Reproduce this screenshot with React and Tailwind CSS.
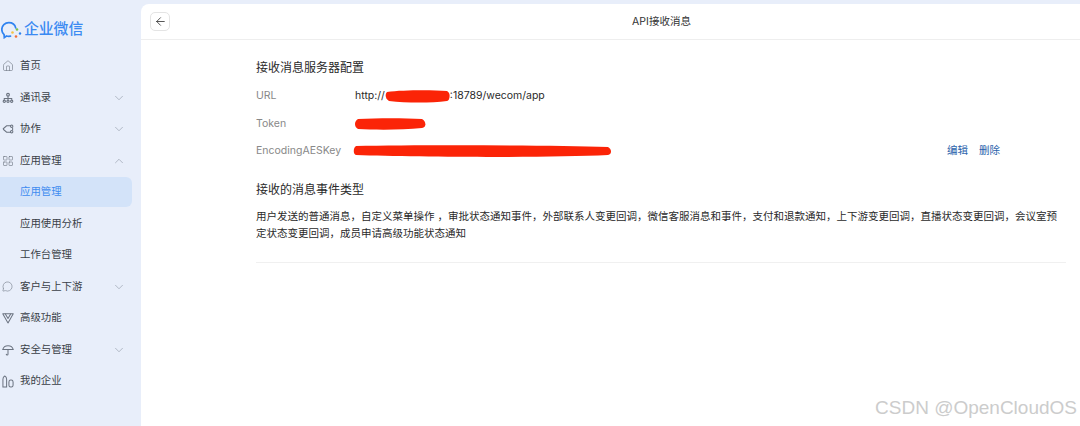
import React from 'react';
import { ChevronDown, ChevronUp, ArrowLeft, House, LayoutGrid, MessageCircle } from 'lucide-react';

const font = 'font-["Inter","Noto_Sans_CJK_SC",sans-serif]';

function Logo() {
    return (
        <svg width="22" height="20" viewBox="0 0 22 20" fill="none">
            <path d="M9.500 17.200c-.6.100-1.200.1-1.800.1-.8 0-1.500-.1-2.200-.3L3.300 18.600l-.2-3C1.600 14.200.8 12.500.8 10.500c0-3.900 3.100-6.900 7-6.900 3.400 0 6.200 2.200 6.900 5.300" stroke="#2f83f0" strokeWidth="1.700" strokeLinecap="round" />
            <circle cx="16" cy="10.500" r="1.300" fill="#7cc04a" />
            <circle cx="19" cy="14.500" r="1.200" fill="#2f83f0" />
            <circle cx="15" cy="17.500" r="1.300" fill="#f0703a" />
            <circle cx="11.500" cy="13.500" r="1.300" fill="#f5c242" />
        </svg>
    );
}

function OrgIcon() {
    return (
        <svg width="12" height="12" viewBox="0 0 13 13" fill="none" stroke="#6b7380" strokeWidth="1.200">
            <circle cx="6.500" cy="3" r="1.500" />
            <path d="M2.500 8.500V7h8v1.500M6.500 4.500V8.500" />
            <circle cx="2.500" cy="10" r="1.200" />
            <circle cx="6.500" cy="10" r="1.200" />
            <circle cx="10.500" cy="10" r="1.200" />
        </svg>
    );
}

function CollabIcon() {
    return (
        <svg width="12" height="12" viewBox="0 0 13 13" fill="none" stroke="#6b7380" strokeWidth="1.100">
            <path d="M1 6.500 5 3h5M1 6.500 5 10h5" />
            <circle cx="10.500" cy="3.500" r="1.300" />
            <circle cx="10.500" cy="9.500" r="1.300" />
            <path d="M11.500 5v3" />
        </svg>
    );
}

function VipIcon() {
    return (
        <svg width="12" height="12" viewBox="0 0 13 13" fill="none" stroke="#6b7380" strokeWidth="1.100" strokeLinejoin="round">
            <path d="M.8 2h11.400L6.500 11.800z" />
            <path d="M3.500 2 6.500 7l3-5" />
        </svg>
    );
}

function UmbrellaIcon() {
    return (
        <svg width="12" height="12" viewBox="0 0 13 13" fill="none" stroke="#6b7380" strokeWidth="1.100" strokeLinecap="round">
            <path d="M.8 6C1.500 3.300 3.700 1.800 6.500 1.800S11.500 3.300 12.200 6z" />
            <path d="M6.500 6v5c0 1.200-1.800 1.200-1.900 0" />
        </svg>
    );
}

function CompanyIcon() {
    return (
        <svg width="12" height="13" viewBox="0 0 13 14" fill="none" stroke="#6b7380" strokeWidth="1.100">
            <path d="M1 13V4.500C1 3 2 1.500 3 1c1 .5 2 2 2 3.500V13z" />
            <rect x="7.500" y="5.500" width="4.500" height="7.500" rx="2" />
        </svg>
    );
}

const chevron = <ChevronDown size={14} strokeWidth={1} className="text-[#8a93a1]" />;

const navItems = [
    { label: '首页', icon: <House size={12} strokeWidth={1.200} className="text-[#6b7380]" /> },
    { label: '通讯录', icon: <OrgIcon />, arrow: chevron },
    { label: '协作', icon: <CollabIcon />, arrow: chevron },
    {
        label: '应用管理',
        icon: <LayoutGrid size={12} strokeWidth={1.200} className="text-[#6b7380]" />,
        arrow: <ChevronUp size={14} strokeWidth={1} className="text-[#8a93a1]" />,
    },
    { label: '应用管理', active: true },
    { label: '应用使用分析' },
    { label: '工作台管理' },
    { label: '客户与上下游', icon: <MessageCircle size={11} strokeWidth={1.200} className="text-[#6b7380]" />, arrow: chevron },
    { label: '高级功能', icon: <VipIcon /> },
    { label: '安全与管理', icon: <UmbrellaIcon />, arrow: chevron },
    { label: '我的企业', icon: <CompanyIcon /> },
];

function Scribble({ width, height, d, className }) {
    return (
        <svg width={width} height={height} viewBox={`0 0 ${width} ${height}`} className={`shrink-0 ${className || ''}`}>
            <path d={d} fill="#fb2407" />
        </svg>
    );
}

function ConfigRow({ label, children, actions }) {
    return (
        <div className="flex h-[27.500px] items-center">
            <div className="w-[99px] text-[10.500px] text-[#888888]">{label}</div>
            <div className="flex flex-1 items-center text-[10.500px] text-[#2a2a2a]">{children}</div>
            {actions}
        </div>
    );
}

export default function App() {
    return (
        <div className={`relative flex h-[426px] w-[1080px] overflow-hidden bg-[#e8eefa] ${font}`}>
            <aside className="w-[141px] shrink-0">
                <div className="flex h-[50.500px] items-end pb-[12px] pl-[1px]">
                    <Logo />
                    <span className="ml-[1px] text-[14.800px] leading-[20px] font-medium text-[#3b8af2]">企业微信</span>
                </div>
                <nav>
                    {navItems.map((item, i) => (
                        <div key={i} className="flex h-[31.500px] items-center pr-[9px]">
                            <div className={`flex h-[30px] flex-1 items-center rounded-r-[6px] pr-[6px] ${item.active ? 'bg-[#d3e3f9]' : ''}`}>
                                <div className="mr-[5px] flex w-[15px] shrink-0 items-center justify-center">{item.icon}</div>
                                <span className={`flex-1 text-[10.400px] ${item.active ? 'text-[#3f8cf0]' : 'text-[#3a3f47]'}`}>{item.label}</span>
                                {item.arrow}
                            </div>
                        </div>
                    ))}
                </nav>
            </aside>

            <main className="mt-[4px] flex-1 rounded-tl-[8px] bg-white">
                <header className="relative flex h-[36px] items-center justify-center border-b border-[#eeeeee] pl-[102px]">
                    <button className="absolute top-[8px] left-[9px] flex h-[19px] w-[20px] items-center justify-center rounded-[5px] border border-[#e4e4e4] bg-white">
                        <ArrowLeft size={13} strokeWidth={1.400} className="text-[#222]" />
                    </button>
                    <h1 className="text-[10.500px] text-[#333]">API接收消息</h1>
                </header>

                <div className="ml-[115px] w-[810px] pt-[19px]">
                    <h2 className="text-[12px] leading-[18px] text-[#2a2a2a]">接收消息服务器配置</h2>
                    <div className="mt-[5.500px]">
                        <ConfigRow label="URL">
                            <span>http://</span>
                            <Scribble width={65} height={13} d="M2 2C18 0 46 0 62 1c4 2 3 9 0 10-16 2-40 2-58 0C0 9 0 4 2 2z" />
                            <span>:18789/wecom/app</span>
                        </ConfigRow>
                        <ConfigRow label="Token">
                            <Scribble width={71} height={12} d="M3 1c20-1 46-1 64 0 4 2 5 8 0 9-20 2-46 2-64 1-4-2-4-8 0-10z" />
                        </ConfigRow>
                        <ConfigRow
                            label="EncodingAESKey"
                            actions={
                                <div className="mr-[66px] flex gap-[11px] text-[10.500px] text-[#2a62ab]">
                                    <span>编辑</span>
                                    <span>删除</span>
                                </div>
                            }
                        >
                            <Scribble
                                width={258}
                                height={12}
                                className="-ml-[2px]"
                                d="M3 1c60-1 190-1 252 1 4 2 4 7 0 8-60 3-190 2-252 0C0 9 0 3 3 1z"
                            />
                        </ConfigRow>
                    </div>
                    <h2 className="mt-[16px] text-[12px] leading-[18px] text-[#2a2a2a]">接收的消息事件类型</h2>
                    <p className="mt-[10px] border-b border-[#f0f0f0] pb-[20px] text-[10.500px] leading-[16.500px] text-[#2a2a2a]">
                        用户发送的普通消息，自定义菜单操作 ，审批状态通知事件，外部联系人变更回调，微信客服消息和事件，支付和退款通知，上下游变更回调，直播状态变更回调，会议室预定状态变更回调，成员申请高级功能状态通知
                    </p>
                </div>
            </main>

            <div className='absolute right-[3px] bottom-[7px] font-["Liberation_Sans",sans-serif] text-[19px] leading-[22px] text-[#cccccc]'>
                CSDN @OpenCloudOS
            </div>
        </div>
    );
}
